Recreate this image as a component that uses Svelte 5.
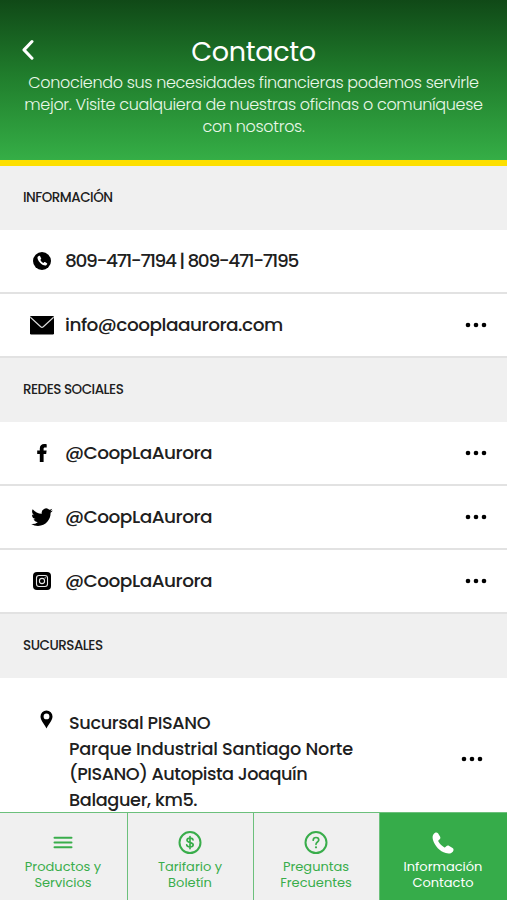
<script lang="ts">
	type Contact = { icon: string, text: string, kind: string, menu: boolean }

	const info: Contact[] = [
		{ icon: 'phone', text: '809-471-7194 | 809-471-7195', kind: 'phone', menu: false },
		{ icon: 'mail', text: 'info@cooplaaurora.com', kind: 'email', menu: true }
	]

	const social: Contact[] = [
		{ icon: 'facebook', text: '@CoopLaAurora', kind: 'handle', menu: true },
		{ icon: 'twitter', text: '@CoopLaAurora', kind: 'handle', menu: true },
		{ icon: 'instagram', text: '@CoopLaAurora', kind: 'handle', menu: true }
	]

	const branch = ['Sucursal PISANO', 'Parque Industrial Santiago Norte', '(PISANO) Autopista Joaquín', 'Balaguer, km5.']

	const tabs = [
		{ icon: 'menu', lines: ['Productos y', 'Servicios'] },
		{ icon: 'money', lines: ['Tarifario y', 'Boletín'] },
		{ icon: 'help', lines: ['Preguntas', 'Frecuentes'] },
		{ icon: 'call', lines: ['Información', 'Contacto'] }
	]

	let active = $state('call')
</script>

{#snippet dots()}
	<button class="more" aria-label="Opciones">
		<svg width="22" height="6" viewBox="0 0 22 6">
			<circle cx="3" cy="3" r="2.3" />
			<circle cx="11" cy="3" r="2.3" />
			<circle cx="19" cy="3" r="2.3" />
		</svg>
	</button>
{/snippet}

{#snippet row(item: Contact)}
	<div class="row">
		<span class="row-icon">
			{#if item.icon === 'phone'}
				<svg width="18" height="18" viewBox="0 0 18 18">
					<circle cx="9" cy="9" r="9" />
					<path class="light" d="M5.7 3.9 4.5 5.1C4 8.9 9.2 14.1 13 13.5l1.1-1.3c.3-.4.2-.7-.2-1l-1.9-1.1c-.4-.2-.7-.1-.9.2l-.6.7c-1.3-.5-2.7-1.9-3.2-3.2l.7-.6c.3-.3.3-.6.1-.9L7 4.1c-.3-.5-.8-.6-1.3-.2z" />
				</svg>
			{:else if item.icon === 'mail'}
				<svg width="24" height="19" viewBox="0 0 24 19">
					<rect width="24" height="18.5" rx="1.2" />
					<path class="fold" d="M.3 1.3 10.7 10.8q1.3 1 2.6 0L23.7 1.3" />
				</svg>
			{:else if item.icon === 'facebook'}
				<svg width="10" height="18" viewBox="0 0 10 18">
					<path d="M2.8 18V10H.2V6.6h2.6V4.500C2.800 1.700 4.500.1 7.200.1c1.100 0 2.100.1 2.500.2v3.100H8c-1.100 0-1.400.6-1.400 1.400v1.800h3L9.200 10H6.600v8z" />
				</svg>
			{:else if item.icon === 'twitter'}
				<svg width="22" height="18" viewBox="0 1.8 24 20">
					<path d="M23.950 4.570a10 10 0 0 1-2.820.77 4.960 4.960 0 0 0 2.160-2.720c-.95.560-2 .960-3.130 1.190a4.920 4.920 0 0 0-8.380 4.480C7.690 8.090 4.070 6.130 1.640 3.160a4.820 4.820 0 0 0-.67 2.480c0 1.710.870 3.210 2.190 4.100a4.900 4.900 0 0 1-2.230-.62v.06a4.920 4.920 0 0 0 3.950 4.830 5 5 0 0 1-2.210.080 4.940 4.940 0 0 0 4.600 3.420A9.870 9.870 0 0 1 0 19.540a14 14 0 0 0 7.550 2.210c9.050 0 14-7.500 14-13.980 0-.210 0-.420-.020-.630a9.940 9.940 0 0 0 2.460-2.550z" />
				</svg>
			{:else}
				<svg width="18" height="18" viewBox="0 0 18 18">
					<rect width="18" height="18" rx="4" />
					<rect class="outline" x="3.5" y="3.5" width="11" height="11" rx="2.5" />
					<circle class="outline" cx="9" cy="9" r="2.6" />
					<circle class="light" cx="12.2" cy="5.8" r=".6" />
				</svg>
			{/if}
		</span>
		<span class="row-text {item.kind}">{item.text}</span>
		{#if item.menu}
			{@render dots()}
		{/if}
	</div>
{/snippet}

<div class="screen">
	<header>
		<button class="back" aria-label="Volver">
			<svg width="14" height="22" viewBox="0 0 14 22">
				<path d="M12 2.5 4 10.9l8 8.3" />
			</svg>
		</button>
		<h1>Contacto</h1>
		<p>
			<span>Conociendo sus necesidades financieras podemos servirle</span>
			<span>mejor. Visite cualquiera de nuestras oficinas o comuníquese</span>
			<span>con nosotros.</span>
		</p>
	</header>

	<main>
		<h2>INFORMACIÓN</h2>
		{#each info as item}
			{@render row(item)}
		{/each}

		<h2>REDES SOCIALES</h2>
		{#each social as item}
			{@render row(item)}
		{/each}

		<h2>SUCURSALES</h2>
		<div class="branch">
			<svg width="13" height="19" viewBox="0 0 13 19">
				<path fill-rule="evenodd" d="M6.5.5a6 6 0 0 0-6 6.100c0 4.200 4.200 7.700 6 12 1.800-4.300 6-7.800 6-12a6 6 0 0 0-6-6.100zm0 3a2.900 2.900 0 1 1 0 5.800 2.900 2.900 0 0 1 0-5.800z" />
			</svg>
			<address>
				{#each branch as line}
					<span>{line}</span>
				{/each}
			</address>
			{@render dots()}
		</div>
	</main>

	<nav>
		{#each tabs as tab}
			<button class="tab" class:active={active === tab.icon} onclick={() => (active = tab.icon)}>
				<svg width="24" height="24" viewBox="0 0 24 24">
					{#if tab.icon === 'menu'}
						<path class="line" d="M3.5 6.700h17M3.500 11.500h17M3.500 16.300h17" />
					{:else if tab.icon === 'money'}
						<circle class="line" cx="12" cy="11.6" r="10.5" />
						<path class="line thin" d="M12 5.6v12M15 8.900c-.3-1.200-1.400-1.700-3-1.700-1.700 0-3 .7-3 2.100 0 3 6.200 1.500 6.200 4.500 0 1.500-1.300 2.200-3.200 2.200-1.800 0-3-.7-3.300-2.100" />
					{:else if tab.icon === 'help'}
						<circle class="line" cx="12" cy="11.6" r="10.5" />
						<path class="line thin" d="M9.200 9.200c0-1.700 1.100-2.700 2.800-2.700s2.800 1 2.800 2.500c0 2-2.800 2.100-2.800 4.300" />
						<circle cx="12" cy="16.3" r="1.1" />
					{:else}
						<path d="M2.500 3.200C3.700 1.500 5.800.9 7 2.300l2 3.200c.7 1.100.4 2.300-.6 3L7.600 9.200c-.4.4-.5.8-.2 1.300 1.400 2.400 3.300 4.300 5.700 5.800.5.3 1 .2 1.400-.2l.8-.8c.7-.9 1.900-1 2.900-.4l3.400 2.200c1.300.9 1.200 2.500.2 3.600-1.700 1.900-4.200 2.300-7 1.400C8.800 20.200 3.800 15 2 8.900c-.6-2.200-.6-4.100.5-5.700z" />
					{/if}
				</svg>
				<span class="tab-label">
					{#each tab.lines as line}
						<span>{line}</span>
					{/each}
				</span>
			</button>
		{/each}
	</nav>
</div>

<style>
	:global(body) {
		margin: 0;
		background: #fff;
	}

	.screen {
		display: flex;
		flex-direction: column;
		height: 900px;
		overflow: hidden;
		font-family: Poppins, Inter, sans-serif;
		color: #202020;
		background: #fff;
	}

	button {
		border: 0;
		padding: 0;
		background: none;
		font: inherit;
		cursor: pointer;
	}

	svg {
		display: block;
		flex: none;
	}

	header {
		box-sizing: border-box;
		flex: none;
		position: relative;
		height: 166px;
		padding-top: 32px;
		border-bottom: 6px solid #fddf00;
		background: linear-gradient(#104917, #207d2c 47%, #35ae46) padding-box;
		color: #fff;
		text-align: center;
	}

	.back {
		position: absolute;
		left: 20px;
		top: 39px;
	}

	.back path {
		fill: none;
		stroke: #fff;
		stroke-width: 3;
		stroke-linecap: round;
		stroke-linejoin: round;
	}

	h1 {
		margin: 0;
		font-size: 27px;
		line-height: 40px;
		font-weight: 400;
		letter-spacing: -0.3px;
	}

	header p {
		margin: 0;
		font-size: 16px;
		line-height: 22px;
		font-weight: 300;
		letter-spacing: -0.33px;
		color: #eaf8e9;
		white-space: nowrap;
	}

	header p span,
	address span,
	.tab-label span {
		display: block;
	}

	main {
		flex: 1;
		min-height: 0;
		overflow: hidden;
	}

	h2 {
		box-sizing: border-box;
		height: 64px;
		margin: 0;
		padding-left: 23px;
		background: #f0f0f0;
		font-size: 13.5px;
		line-height: 63px;
		font-weight: 500;
		letter-spacing: -0.5px;
	}

	.row {
		box-sizing: border-box;
		display: flex;
		align-items: center;
		height: 64px;
		padding: 0 20px 0 23px;
		border-bottom: 2px solid #e2e2e2;
	}

	.row-icon {
		display: flex;
		justify-content: center;
		width: 38px;
		margin-right: 4px;
	}

	.row-text {
		font-size: 18.5px;
		line-height: 26px;
		font-weight: 500;
		letter-spacing: -0.5px;
		white-space: nowrap;
	}

	.row-text.phone {
		margin-bottom: 1px;
		letter-spacing: -1.31px;
	}

	.light {
		fill: #fff;
	}

	.fold {
		fill: none;
		stroke: #ddd;
		stroke-width: 1.2;
	}

	.outline {
		fill: none;
		stroke: #e8e8e8;
		stroke-width: 1.1;
	}

	.more {
		margin: 0 0 1px auto;
	}

	.branch {
		display: flex;
		align-items: flex-start;
		padding: 32px 24px 0 40px;
	}

	address {
		margin-left: 16px;
		font-size: 17.7px;
		line-height: 25.7px;
		font-weight: 500;
		font-style: normal;
		letter-spacing: -0.36px;
		white-space: nowrap;
	}

	address span:nth-child(2) {
		letter-spacing: -0.2px;
	}

	address span:nth-child(3) {
		letter-spacing: -0.48px;
	}

	.branch .more {
		margin-top: 46px;
	}

	nav {
		flex: none;
		box-sizing: border-box;
		display: grid;
		grid-template-columns: 128px 126px 126px 127px;
		height: 88px;
		border-top: 1px solid #6cc07c;
		background: #f0f0f0;
	}

	.tab {
		display: flex;
		flex-direction: column;
		align-items: center;
		padding: 18px 1px 0 0;
		border-right: 1px solid #6cc07c;
		color: #39ad4b;
		fill: currentColor;
	}

	.tab.active {
		border-right: 0;
		background: #36ac4a;
		color: #fff;
	}

	.line {
		fill: none;
		stroke: currentColor;
		stroke-width: 2;
		stroke-linecap: round;
	}

	.line.thin {
		stroke-width: 1.7;
	}

	.tab-label {
		margin-top: 4px;
		font-size: 13px;
		line-height: 16px;
	}
</style>
